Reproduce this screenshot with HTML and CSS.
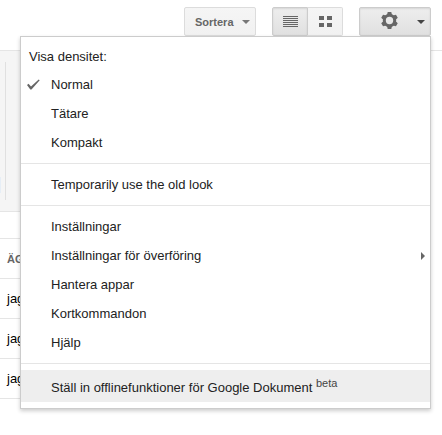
FILE: index.html
```html
<!DOCTYPE html>
<html lang="sv">
<head>
  <meta charset="UTF-8">
  <title>Google Dokument</title>
  <link rel="stylesheet" href="styles.css">
</head>
<body>
  <header class="toolbar">
    <button type="button" class="btn btn-sort">Sortera <span class="arrow-down"></span></button>

    <div class="btn-group">
      <button type="button" class="btn active" aria-label="Lista">
        <svg width="15" height="11" viewBox="0 0 15 11" shape-rendering="crispEdges" fill="#666">
          <rect width="15" height="1"/>
          <rect y="2" width="15" height="1"/>
          <rect y="4" width="15" height="1"/>
          <rect y="6" width="15" height="1"/>
          <rect y="8" width="15" height="1"/>
          <rect y="10" width="15" height="1"/>
        </svg>
      </button>
      <button type="button" class="btn" aria-label="Rutnät">
        <svg width="13" height="11" viewBox="0 0 13 11" shape-rendering="crispEdges" fill="#666">
          <rect width="5" height="4"/>
          <rect x="8" width="5" height="4"/>
          <rect y="7" width="5" height="4"/>
          <rect x="8" y="7" width="5" height="4"/>
        </svg>
      </button>
    </div>

    <button type="button" class="btn btn-settings active" aria-label="Inställningar" aria-haspopup="true">
      <svg class="gear" width="17" height="17" viewBox="0 0 17 17">
        <circle cx="8.500" cy="8.500" r="5.200" fill="none" stroke="#666" stroke-width="3"/>
        <g fill="#666">
          <path id="teeth" d="M6 3 6.700 0h3.600L11 3zM6 14l.7 3h3.600l.7-3z"/>
          <use href="#teeth" transform="rotate(60 8.500 8.500)"/>
          <use href="#teeth" transform="rotate(120 8.500 8.500)"/>
        </g>
      </svg>
      <span class="arrow-down dark"></span>
    </button>
  </header>

  <div class="menu" role="menu">
    <div class="menu-title">Visa densitet:</div>
    <button type="button" class="menu-item" role="menuitemradio" aria-checked="true">
      <svg class="check" width="13" height="11" viewBox="0 0 13 11">
        <path fill="#666" d="M0 6l1.500-1.300L4 7.400 11.700.5l1 .8L4.500 10.500H3.300z"/>
      </svg>
      Normal
    </button>
    <button type="button" class="menu-item" role="menuitemradio" aria-checked="false">Tätare</button>
    <button type="button" class="menu-item" role="menuitemradio" aria-checked="false">Kompakt</button>
    <hr>
    <button type="button" class="menu-item" role="menuitem">Temporarily use the old look</button>
    <hr>
    <button type="button" class="menu-item" role="menuitem">Inställningar</button>
    <button type="button" class="menu-item has-submenu" role="menuitem">Inställningar för överföring <span class="arrow-right"></span></button>
    <button type="button" class="menu-item" role="menuitem">Hantera appar</button>
    <button type="button" class="menu-item" role="menuitem">Kortkommandon</button>
    <button type="button" class="menu-item" role="menuitem">Hjälp</button>
    <hr>
    <button type="button" class="menu-item offline" role="menuitem">Ställ in offlinefunktioner för Google Dokument <sup>beta</sup></button>
  </div>

  <main>
    <div class="filters">
      <div class="filter-box"><div class="filter-selected"></div></div>
    </div>
    <table class="docs">
      <thead>
        <tr><th>ÄGARE</th></tr>
      </thead>
      <tbody>
        <tr><td>jag</td></tr>
        <tr><td>jag</td></tr>
        <tr><td>jag</td></tr>
      </tbody>
    </table>
  </main>
</body>
</html>
```

FILE: styles.css
```css
* {
  box-sizing: border-box;
}

body {
  margin: 0;
  background: #fff;
  color: #222;
  font-family: "Liberation Sans", Arial, sans-serif;
  font-size: 13px;
}

.toolbar {
  display: flex;
  justify-content: flex-end;
  gap: 16px;
  height: 51px;
  padding: 7px 11px 0 0;
  border-bottom: 1px solid #e5e5e5;
}

.btn {
  display: flex;
  align-items: center;
  justify-content: center;
  width: 36px;
  height: 29px;
  padding: 0;
  border: 1px solid #dcdcdc;
  border-radius: 2px;
  background: linear-gradient(#f5f5f5, #f1f1f1);
  color: #666;
  font: bold 11px "Liberation Sans", Arial, sans-serif;
}

.btn.active {
  border-color: #ccc;
  background: linear-gradient(#eee, #e0e0e0);
  box-shadow: inset 0 1px 2px rgba(0, 0, 0, 0.1);
}

.btn-sort {
  justify-content: space-between;
  width: 72px;
  padding: 0 5px 0 10px;
}

.btn-group {
  display: flex;
}

.btn-group .btn:first-child {
  border-radius: 2px 0 0 2px;
}

.btn-group .btn:last-child {
  width: 35px;
  border-left: 0;
  border-radius: 0 2px 2px 0;
}

.btn-settings {
  justify-content: flex-end;
  gap: 19px;
  width: 72px;
  padding-right: 5px;
}

.gear {
  margin-bottom: 2px;
}

.arrow-down {
  border: 4px solid transparent;
  border-top-color: #777;
  border-bottom: 0;
}

.arrow-down.dark {
  border-top-color: #444;
}

/* menu */
.menu {
  position: absolute;
  top: 36px;
  left: 20px;
  right: 11px;
  padding: 6px 0;
  border: 1px solid #ccc;
  background: #fff;
  box-shadow: 0 2px 4px rgba(0, 0, 0, 0.2);
}

.menu-title {
  padding-left: 8px;
  line-height: 27px;
}

.menu-item {
  display: flex;
  align-items: center;
  width: 100%;
  height: 29px;
  padding: 0 5px 0 30px;
  border: 0;
  background: none;
  color: #222;
  font: 13px "Liberation Sans", Arial, sans-serif;
  text-align: left;
}

.menu-item:hover,
.menu-item.offline {
  background: #eee;
}

.check {
  margin: 0 11px 0 -24px;
}

.has-submenu {
  justify-content: space-between;
}

.arrow-right {
  border: 4px solid transparent;
  border-left-color: #666;
  border-right: 0;
}

.menu-item.offline {
  display: block;
  height: 32px;
  padding-top: 2px;
}

.menu-item sup {
  color: #444;
  font-size: 11px;
  line-height: 11px;
}

.menu hr {
  height: 1px;
  margin: 6px 0;
  border: 0;
  background: #e5e5e5;
}

/* document list */
main {
  margin-right: 11px;
}

.filters {
  height: 161px;
  padding: 11px 0;
  border-bottom: 1px solid #e5e5e5;
  background: #f5f5f5;
}

.filter-box {
  display: flex;
  align-items: flex-end;
  width: 6px;
  height: 100%;
  padding-bottom: 7px;
  border-right: 1px solid #e0e0e0;
}

.filter-selected {
  width: 1px;
  height: 16px;
  background: #e6eef6;
}

.docs {
  width: 100%;
  margin-top: 26px;
  border-collapse: separate;
  border-spacing: 0;
  border-top: 1px solid #e5e5e5;
}

.docs th,
.docs td {
  height: 40px;
  padding: 0 7px;
  border-bottom: 1px solid #e5e5e5;
  color: #000;
  text-align: left;
}

.docs th {
  color: #666;
  font-size: 11px;
}
```
